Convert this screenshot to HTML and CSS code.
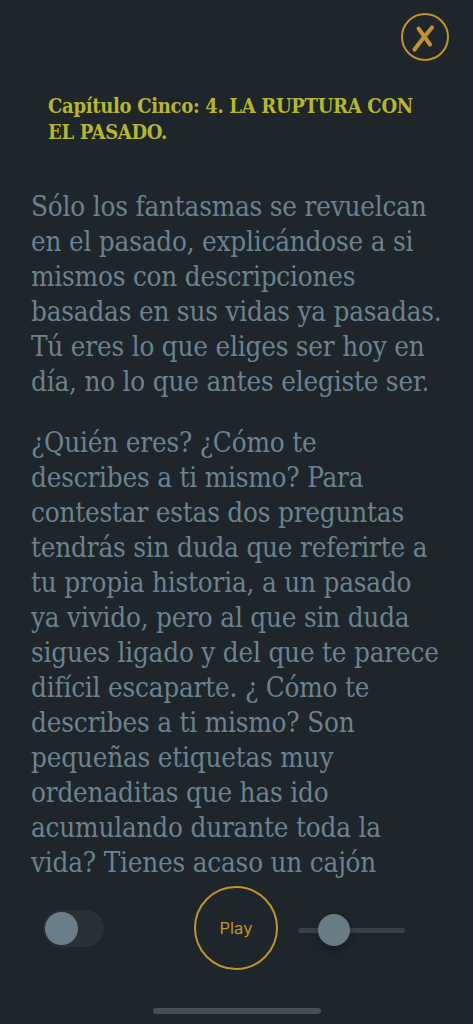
FILE: index.html
```html
<!DOCTYPE html>
<html lang="es">
<head>
<meta charset="utf-8">
<title>Capítulo Cinco</title>
<link rel="stylesheet" href="styles.css">
</head>
<body>
<div class="screen">
  <div class="toolbar">
    <button class="close" aria-label="Cerrar">
      <svg viewBox="0 0 48 48" width="48" height="48">
        <circle cx="24" cy="24" r="23" fill="none" stroke="#c4922c" stroke-width="2"/>
        <path d="M17.5 15.5 Q23 23 29 31.5" fill="none" stroke="#c4922c" stroke-width="4" stroke-linecap="round"/>
        <path d="M31 14.5 Q22 25 13.5 36.5" fill="none" stroke="#c4922c" stroke-width="4.2" stroke-linecap="round"/>
      </svg>
    </button>
  </div>
  <div class="reader">
    <h1 class="chapter">Capítulo Cinco: 4. LA RUPTURA CON<br>EL PASADO.</h1>
    <p class="para">Sólo los fantasmas se revuelcan<br>en el pasado, explicándose a si<br>mismos con descripciones<br>basadas en sus vidas ya pasadas.<br>Tú eres lo que eliges ser hoy en<br>día, no lo que antes elegiste ser.</p>
    <p class="para">¿Quién eres? ¿Cómo te<br>describes a ti mismo? Para<br>contestar estas dos preguntas<br>tendrás sin duda que referirte a<br>tu propia historia, a un pasado<br>ya vivido, pero al que sin duda<br>sigues ligado y del que te parece<br>difícil escaparte. ¿ Cómo te<br>describes a ti mismo? Son<br>pequeñas etiquetas muy<br>ordenaditas que has ido<br>acumulando durante toda la<br>vida? Tienes acaso un cajón<br>lleno de etiquetas que te definen?</p>
  </div>
  <div class="controls">
    <div class="toggle"><span class="knob"></span></div>
    <button class="play">Play</button>
    <div class="slider"><span class="thumb"></span></div>
  </div>
  <div class="home"></div>
</div>
</body>
</html>
```
FILE: styles.css
```css
html, body {
  margin: 0;
  padding: 0;
  background: #1e252b;
}
.screen {
  width: 473px;
  height: 1024px;
  display: flex;
  flex-direction: column;
  overflow: hidden;
}
.toolbar {
  height: 73px;
  display: flex;
  justify-content: flex-end;
  align-items: flex-start;
  padding: 13px 24px 0 0;
  box-sizing: border-box;
}
.close {
  width: 48px;
  height: 48px;
  padding: 0;
  border: 0;
  background: none;
  display: block;
}
.close svg { display: block; }
.reader {
  height: 811px;
  overflow: hidden;
  padding: 0 4px 0 31px;
  box-sizing: border-box;
}
.chapter {
  margin: 20px 0 0 17px;
  font-family: "DejaVu Serif Condensed", "DejaVu Serif", serif;
  font-stretch: condensed;
  font-weight: bold;
  font-size: 20px;
  line-height: 26px;
  color: #b7b72c;
  letter-spacing: -0.3px;
  white-space: nowrap;
}
.para {
  margin: 44px 0 0 0;
  font-family: "DejaVu Serif Condensed", "DejaVu Serif", serif;
  font-stretch: condensed;
  font-size: 27.6px;
  line-height: 35px;
  color: #6b8290;
  letter-spacing: -0.2px;
  white-space: nowrap;
}
.para + .para { margin-top: 26px; }
.controls {
  height: 88px;
  display: flex;
  align-items: center;
  padding-left: 43px;
}
.toggle {
  width: 61px;
  height: 37px;
  border-radius: 19px;
  background: #293137;
  display: flex;
  align-items: center;
  padding-left: 2px;
  box-sizing: border-box;
}
.knob {
  width: 33px;
  height: 33px;
  border-radius: 50%;
  background: #6a7e89;
}
.play {
  margin-left: 90px;
  width: 84px;
  height: 84px;
  border-radius: 50%;
  border: 2px solid #c4922c;
  background: none;
  color: #c4922c;
  font-family: "Inter", "Roboto", sans-serif;
  font-size: 16.5px;
  padding: 0;
}
.slider {
  margin-left: 20px;
  width: 107px;
  height: 5px;
  border-radius: 3px;
  background: #394147;
  position: relative;
  margin-top: 5px;
}
.thumb {
  position: absolute;
  left: 20px;
  top: -14px;
  width: 32px;
  height: 32px;
  border-radius: 50%;
  background: #687c86;
  box-shadow: 0 4px 8px rgba(0,0,0,0.25);
}
.home {
  margin: 36px auto 0;
  width: 168px;
  height: 6px;
  border-radius: 3px;
  background: #4b4e50;
}
```
